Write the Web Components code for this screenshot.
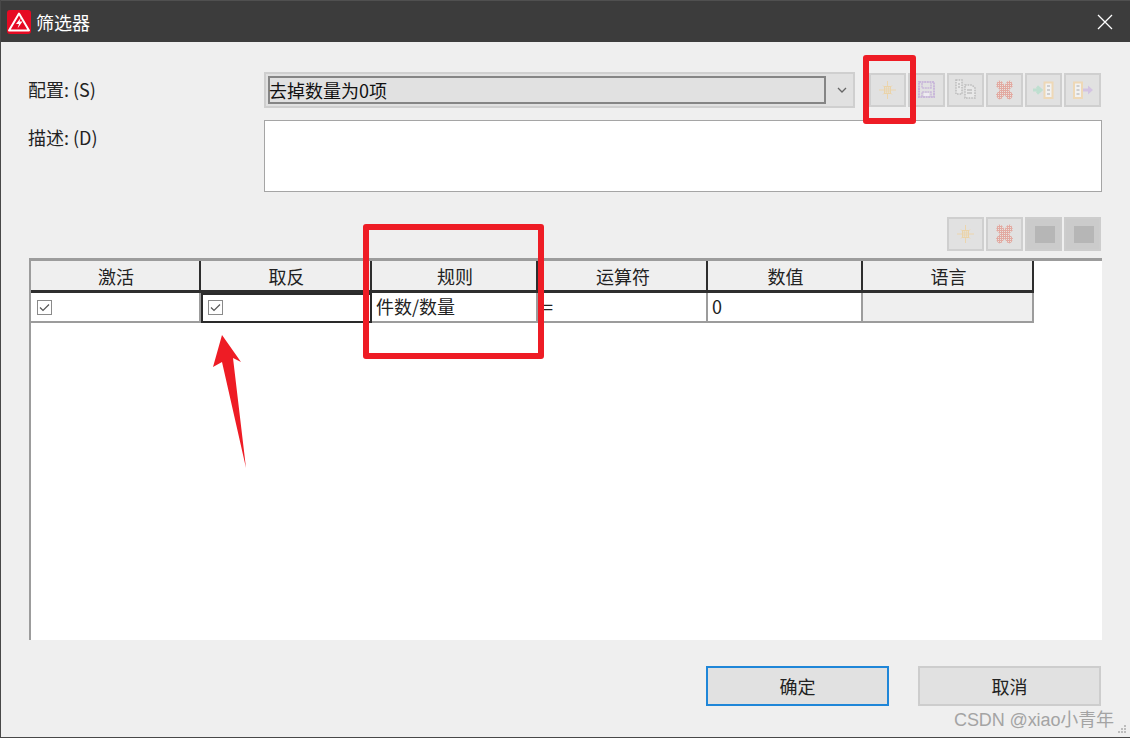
<!DOCTYPE html>
<html lang="zh">
<head>
<meta charset="utf-8">
<style>
html,body{margin:0;padding:0;background:#efefef}
body{font:18px "Noto Sans CJK SC","Noto Sans",sans-serif;color:#222}
</style>
</head>
<body>
<app-dialog>
  <title-bar slot="title">筛选器</title-bar>
  <form-row slot="form" label="配置: (S)" class="cfg">
    <combo-box>去掉数量为0项</combo-box>
    <tool-btn icon="sun"></tool-btn><tool-btn icon="save"></tool-btn><tool-btn icon="copy"></tool-btn><tool-btn icon="x"></tool-btn><tool-btn icon="in"></tool-btn><tool-btn icon="out"></tool-btn>
  </form-row>
  <form-row slot="form" label="描述: (D)"><desc-box></desc-box></form-row>
  <tool-strip slot="strip">
    <tool-btn icon="sun"></tool-btn><tool-btn icon="x"></tool-btn><tool-btn icon="blank"></tool-btn><tool-btn icon="blank"></tool-btn>
  </tool-strip>
  <rule-table slot="table"></rule-table>
  <dlg-btn slot="actions" primary>确定</dlg-btn>
  <dlg-btn slot="actions">取消</dlg-btn>
</app-dialog>

<script>
function def(name, css, html, init){
  customElements.define(name, class extends HTMLElement{
    constructor(){super();const r=this.attachShadow({mode:'open'});
      r.innerHTML='<style>'+css+'</style>'+(typeof html==='function'?html(this):html);}
    connectedCallback(){ if(init) init(this); }
  });
}
const grid=(id,c)=>`<defs><pattern id="${id}" width="2" height="2" patternUnits="userSpaceOnUse"><rect width="2" height="2" fill="${c}"/><rect width="1" height="1" fill="#e8e2de"/></pattern></defs>`;
const ICONS={
 sun:`<g fill="none"><path d="M18.500 8v18M10 17h17" stroke="#ecd5ad" stroke-width="1"/><path d="M14 12.500l9 9M23 12.500l-9 9" stroke="#ecd5ad" stroke-width="1"/><rect x="15.500" y="13.500" width="6" height="7" fill="#e7dfd0" stroke="#ead3a9"/><path d="M17.500 14v6M19.500 14v6M16 16h5M16 18h5" stroke="#ead3a9" stroke-width=".6"/></g>`,
 save:`<g fill="none" stroke="#c9b8da" stroke-width="2" stroke-dasharray="2 .6"><rect x="11" y="9" width="15" height="15"/><path d="M14 10v5h9v-5M14 24v-5h9v5" stroke-width="1.500"/></g><rect x="16" y="20" width="5" height="3" fill="#eeeaf2"/>`,
 copy:`<g fill="#e8e8e8" stroke="#bcbcbc" stroke-width="1.500" stroke-dasharray="1.600 1"><path d="M9 7h6v14H9z"/><path d="M18 12h7l3 3v10H18z"/></g><path d="M11 11h2M11 14h2M20 17h5M20 20h5" stroke="#aaa" stroke-width="1"/>`,
 x:`${grid('xg','#e2a9a1')}<path d="M11 9.500l2-2 3 1 2.500 4 2.500-4 3-1 2 2 1 3.500-4 4 4 4-1 3.500-2 2-3-1-2.500-4-2.500 4-3 1-2-2-1-3.500 4-4-4-4z" fill="url(#xg)"/>`,
 in:`<path d="M8 17h6M12 13.500l4 3.500-4 3.500" fill="none" stroke="#bfdfd0" stroke-width="3"/><rect x="19.500" y="9.500" width="8" height="15.500" fill="#f2f2f2" stroke="#eed8b6" stroke-width="2"/><path d="M22 13h3M22 17h3M22 21h3" stroke="#aaa" stroke-width="1"/>`,
 out:`<rect x="10" y="9.500" width="8" height="15.500" fill="#f2f2f2" stroke="#eed8b6" stroke-width="2"/><path d="M12.500 13h3M12.500 17h3M12.500 21h3" stroke="#aaa" stroke-width="1"/><path d="M19 17h7" stroke="#d3c3e2" stroke-width="3"/><path d="M24 12.500l5 4.500-5 4.500z" fill="#d3c3e2"/>`
};

def('app-dialog',`
 :host{display:flex;flex-direction:column;position:relative;width:1130px;height:738px;box-sizing:border-box;
   border-left:1px solid #484848;border-bottom:1px solid #484848;background:#efefef;overflow:hidden}
 .form{display:flex;flex-direction:column;gap:12px;margin-top:30px}
 .strip{margin-top:25px}
 .table{margin:8px 0 0 28px;width:1073px}
 .actions{display:flex;justify-content:flex-end;gap:29px;margin:26px 29px 0 0}
 .mark{position:absolute;box-sizing:border-box;border:6px solid #ee1c25;border-radius:3px}
 .m1{left:862px;top:55px;width:53px;height:69px}
 .m2{left:362px;top:224px;width:181px;height:135px}
 svg.arrow{position:absolute;left:0;top:0;pointer-events:none}
 .wm{position:absolute;left:953px;top:705px;font:18px "Liberation Sans","Noto Sans CJK SC",sans-serif;color:#a4a4a4;letter-spacing:-.1px;white-space:nowrap}
 svg.grip{position:absolute;left:1117px;top:725px}
`,`
 <slot name="title"></slot>
 <div class="form"><slot name="form"></slot></div>
 <div class="strip"><slot name="strip"></slot></div>
 <div class="table"><slot name="table"></slot></div>
 <div class="actions"><slot name="actions"></slot></div>
 <div class="mark m1"></div><div class="mark m2"></div>
 <svg class="arrow" width="1130" height="738"><polygon points="221,335 212,367 221,362 245,468 232,358 240,362" fill="#ee1c25"/></svg>
 <div class="wm">CSDN @xiao小青年</div>
 <svg class="grip" width="10" height="10"><g fill="#bdbdbd"><rect x="6" y="0" width="2" height="2"/><rect x="3" y="3" width="2" height="2"/><rect x="6" y="3" width="2" height="2"/><rect x="0" y="6" width="2" height="2"/><rect x="3" y="6" width="2" height="2"/><rect x="6" y="6" width="2" height="2"/></g></svg>
`);

def('title-bar',`
 :host{display:flex;align-items:center;height:42px;background:#3c3c3c;color:#fff;box-sizing:border-box;border-top:1px solid #505050;margin-left:-1px;padding-left:7px;position:relative}
 svg.logo{margin-right:5px;flex:none}
 span{font-size:18px;line-height:40px}
 svg.close{position:absolute;right:17px;top:13px}
`,`
 <svg class="logo" width="24" height="24" viewBox="0 0 24 24"><rect width="24" height="24" rx="3" fill="#e60a23"/><path d="M12 3.500L22 20.500H2z" fill="none" stroke="#fff" stroke-width="2" stroke-linejoin="round"/><path d="M14 7.500l-5 6.500h3l-1.500 4.500 5-7h-3z" fill="#fff"/></svg>
 <span><slot></slot></span>
 <svg class="close" width="16" height="16"><path d="M1 1l14 14M15 1L1 15" stroke="#fff" stroke-width="1.300"/></svg>
`);

def('form-row',`
 :host{display:flex;padding-left:27px}
 .l{width:236px;flex:none;font-size:18px;line-height:26px;color:#222;padding-top:4px}
 .c{display:flex;flex:1}
`,el=>`<div class="l">${el.getAttribute('label')}</div><div class="c"><slot></slot></div>`);

def('combo-box',`
 :host{display:flex;align-items:center;width:591px;height:36px;box-sizing:border-box;background:#e1e1e1;border:2px solid #cfcfcf;padding-left:2px;margin-right:14px}
 .v{width:558px;height:28px;box-sizing:border-box;border:2px solid #858585;font-size:18px;line-height:24px;color:#111;white-space:nowrap;text-indent:-1px}
 svg{margin-left:11px}
`,`<div class="v"><slot></slot></div><svg width="10" height="6"><path d="M1 1l4 4 4-4" fill="none" stroke="#666" stroke-width="1.300"/></svg>`);

def('tool-btn',`
 :host{display:block;width:37px;height:34px;box-sizing:border-box;background:#e1e1e1;border:2px solid #cfcfcf;margin:1px 2px 1px 0;flex:none;position:relative}
 :host([icon=blank]){background:#cbcbcb;border-color:#cdcdcd}
 :host(:last-child){margin-right:0}
 svg{position:absolute;left:-2px;top:-2px;filter:blur(.4px)}
 .b{position:absolute;left:8px;top:7px;width:20px;height:17px;background:#b6b6b6}
`,el=>{const i=el.getAttribute('icon');return i==='blank'?'<div class="b"></div>':`<svg width="37" height="34" viewBox="0 0 37 34">${ICONS[i]}</svg>`});

def('desc-box',`:host{display:block;width:838px;height:72px;box-sizing:border-box;background:#fff;border:1px solid #a5a5a5}`,'');
def('tool-strip',`:host{display:flex;justify-content:flex-end;padding-right:29px;height:34px;margin-top:-1px}`,'<slot></slot>');

const colW=[170,171,166,170,155,171];
const heads=['激活','取反','规则','运算符','数值','语言'];
def('rule-table',`
 :host{display:block;box-sizing:border-box;height:382px;background:#fff;border-left:2px solid #9c9c9c;border-top:3px solid #9c9c9c}
 .g{display:grid;grid-template-columns:${colW.map(w=>w+'px').join(' ')};grid-template-rows:32px 30px;width:1003px}
 .h{background:#efefef;border-right:2px solid #2e2e2e;border-bottom:3px solid #2e2e2e;box-sizing:border-box;text-align:center;font-size:18px;line-height:28px;padding:1px 0 0 2px;color:#222}
 .c{box-sizing:border-box;background:#fff;border-right:2px solid #9c9c9c;border-bottom:2px solid #9c9c9c;font-size:18px;line-height:26px;color:#222;padding-left:5px;white-space:nowrap}
 .sel{border:2px solid #2a2a2a;padding-left:5px}
 .sel svg{margin-top:5px}
 .ro{background:#efefef}
 .pad{padding-left:6px}
 .t4{padding-left:4px}
 svg{display:block;margin-top:7px}
`,()=>{
 const cb=`<svg width="15" height="15"><rect x=".5" y=".5" width="14" height="14" fill="#fff" stroke="#8a8a8a"/><path d="M3 7.500l3 3 6-6" fill="none" stroke="#555" stroke-width="1.200"/></svg>`;
 return `<div class="g">${heads.map(h=>`<div class="h">${h}</div>`).join('')}
  <div class="c pad">${cb}</div>
  <div class="c sel">${cb}</div>
  <div class="c t4">件数/数量</div>
  <div class="c">=</div>
  <div class="c t4">0</div>
  <div class="c ro"></div></div>`;
});

def('dlg-btn',`
 :host{display:flex;align-items:center;justify-content:center;width:183px;height:40px;box-sizing:border-box;background:#e1e1e1;border:2px solid #cdcdcd;font-size:18px;color:#222}
 :host([primary]){border-color:#1f86d8;width:183px}
`,'<slot></slot>');
</script>
</body>
</html>
